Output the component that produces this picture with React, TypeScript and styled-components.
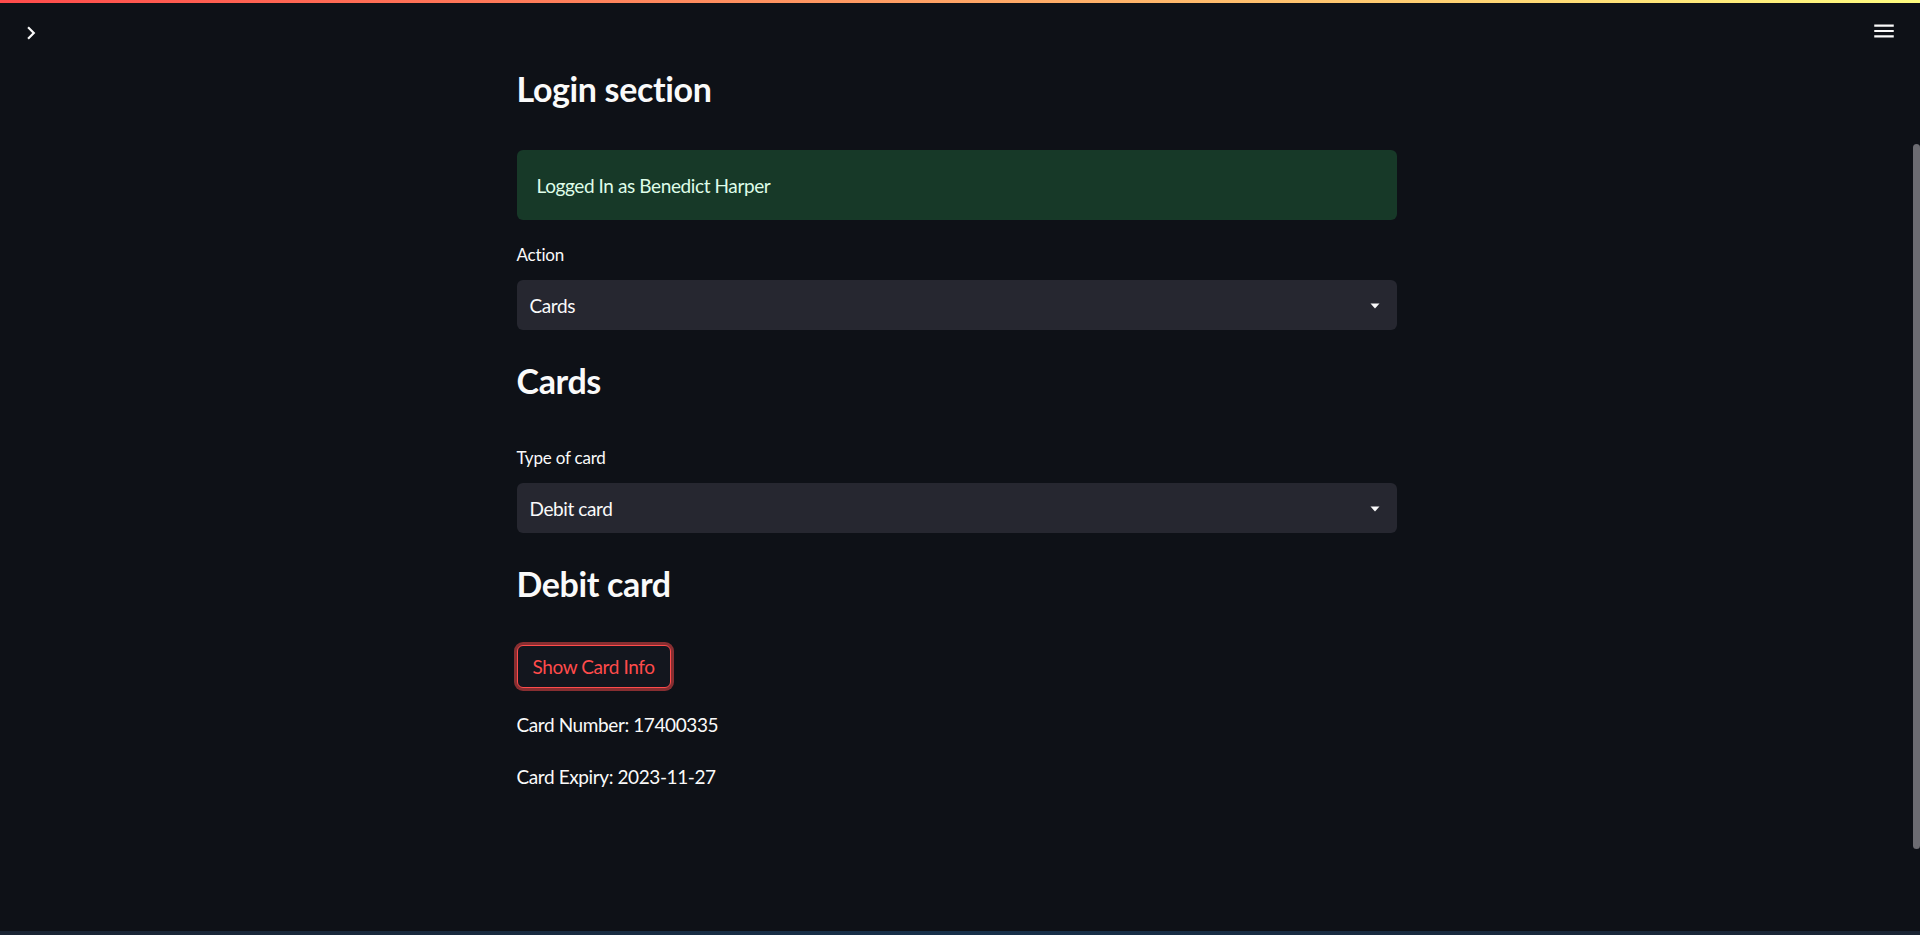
import React from "react";
import styled, { createGlobalStyle } from "styled-components";

const GlobalStyle = createGlobalStyle`
  html, body {
    margin: 0;
    padding: 0;
    background: #0e1117;
    overflow: hidden;
  }
  * { box-sizing: border-box; }
`;

const Shell = styled.div`
  height: 935px;
  display: flex;
  flex-direction: column;
  background: #0e1117;
  color: #fafafa;
  font-family: Lato, "Liberation Sans", sans-serif;
`;

const Decoration = styled.div`
  height: 3px;
  flex: none;
  background: linear-gradient(90deg, rgb(255, 75, 75), rgb(255, 253, 128));
`;

const Body = styled.div`
  flex: 1;
  display: flex;
  min-height: 0;
`;

const Main = styled.main`
  flex: 1;
  display: flex;
  flex-direction: column;
  min-width: 0;
`;

const Header = styled.header`
  height: 61px;
  flex: none;
  display: flex;
  justify-content: space-between;
  align-items: flex-start;
  padding: 15px 16px 0 18px;
`;

const IconButton = styled.button<{ $top?: number }>`
  background: none;
  border: none;
  padding: 0;
  margin: 0;
  width: 26px;
  height: 26px;
  color: #fafafa;
  display: flex;
  cursor: pointer;
  margin-top: ${(p) => p.$top ?? 0}px;
`;

const Block = styled.div`
  width: 880px;
  margin: 0 auto;
  display: flex;
  flex-direction: column;
`;

const Heading = styled.h2<{ $gap: number }>`
  margin: ${(p) => p.$gap}px 0 0 0;
  font-size: 34px;
  line-height: 42px;
  font-weight: 700;
  color: #fafafa;
  letter-spacing: -0.35px;
`;

const Alert = styled.div<{ $gap: number }>`
  margin-top: ${(p) => p.$gap}px;
  background: #173928;
  color: #dffde9;
  border-radius: 6px;
  padding: 21px 20px 19px;
  font-size: 19px;
  letter-spacing: -0.4px;
  line-height: 30px;
`;

const Label = styled.label<{ $gap: number }>`
  display: block;
  margin-top: ${(p) => p.$gap}px;
  font-size: 17px;
  letter-spacing: -0.2px;
  line-height: 21px;
  color: #fafafa;
`;

const Select = styled.div`
  margin-top: 15px;
  height: 50px;
  background: #262730;
  border-radius: 6px;
  display: flex;
  align-items: center;
  justify-content: space-between;
  padding: 1px 17px 0 13px;
  font-size: 19px;
  letter-spacing: -0.4px;
  line-height: 30px;
  color: #fafafa;
`;

const Button = styled.button<{ $gap: number }>`
  align-self: flex-start;
  margin-top: ${(p) => p.$gap}px;
  height: 43px;
  padding: 1px 15px 0;
  background: #13161e;
  border: 1px solid #ff4b4b;
  border-radius: 6px;
  color: #ff4b4b;
  font-family: Lato, "Liberation Sans", sans-serif;
  font-size: 19px;
  letter-spacing: -0.4px;
  line-height: 30px;
  box-shadow: 0 0 0 3px rgba(255, 75, 75, 0.5);
  cursor: pointer;
`;

const Text = styled.p<{ $gap: number }>`
  margin: ${(p) => p.$gap}px 0 0 0;
  font-size: 19px;
  letter-spacing: -0.4px;
  line-height: 30px;
  color: #fafafa;
`;

const ScrollTrack = styled.div`
  width: 7px;
  flex: none;
  padding-top: 141px;
`;

const ScrollThumb = styled.div`
  height: 705px;
  background: #6c6c72;
  border-radius: 4px;
`;

const BottomStrip = styled.div`
  height: 4px;
  flex: none;
  background: linear-gradient(90deg, #1a2433, #17304a 50%, #1a2433);
`;

const Caret = () => (
  <svg width="10" height="6" viewBox="0 0 10 6">
    <path d="M0.5 0.5 H9.5 L5 5.5 Z" fill="#fafafa" />
  </svg>
);

const ChevronRight = () => (
  <svg width="26" height="26" viewBox="0 0 24 24" fill="currentColor">
    <path d="M10 6L8.59 7.41 13.17 12l-4.58 4.59L10 18l6-6z" />
  </svg>
);

const MenuIcon = () => (
  <svg width="26" height="26" viewBox="0 0 24 24" fill="currentColor">
    <path d="M3 18h18v-2H3v2zm0-5h18v-2H3v2zm0-7v2h18V6H3z" />
  </svg>
);

export default function App() {
  return (
    <>
      <GlobalStyle />
      <Shell>
        <Decoration />
        <Body>
          <Main>
            <Header>
              <IconButton $top={2} aria-label="Open sidebar">
                <ChevronRight />
              </IconButton>
              <IconButton $top={0} aria-label="Menu">
                <MenuIcon />
              </IconButton>
            </Header>
            <Block>
              <Heading $gap={4}>Login section</Heading>
              <Alert $gap={40}>Logged In as Benedict Harper</Alert>
              <Label $gap={24}>Action</Label>
              <Select>
                <span>Cards</span>
                <Caret />
              </Select>
              <Heading $gap={30}>Cards</Heading>
              <Label $gap={45}>Type of card</Label>
              <Select>
                <span>Debit card</span>
                <Caret />
              </Select>
              <Heading $gap={30}>Debit card</Heading>
              <Button $gap={40}>Show Card Info</Button>
              <Text $gap={22}>Card Number: 17400335</Text>
              <Text $gap={22}>Card Expiry: 2023-11-27</Text>
            </Block>
          </Main>
          <ScrollTrack>
            <ScrollThumb />
          </ScrollTrack>
        </Body>
        <BottomStrip />
      </Shell>
    </>
  );
}
